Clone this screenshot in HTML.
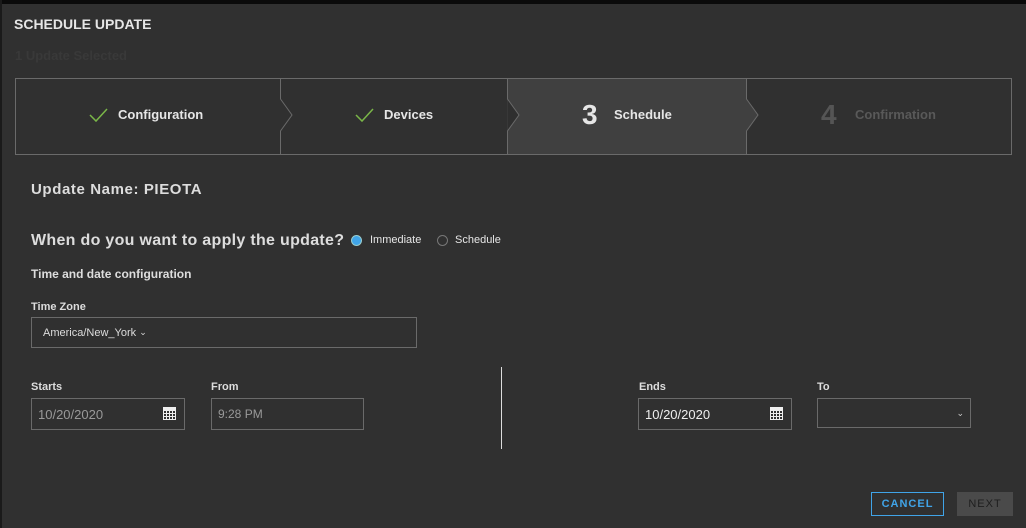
<!DOCTYPE html>
<html><head><style>
*{box-sizing:border-box;margin:0;padding:0}
body{width:1026px;height:528px;background:#303030;font-family:"Liberation Sans",sans-serif;position:relative;overflow:hidden;color:#e6e6e6}
.a{position:absolute}
.top{left:0;top:0;width:1026px;height:4px;background:#0a0a0a}
.lb{font-weight:bold;font-size:11px;color:#ddd}
.box{border:1px solid #6a6a6a;height:32px;font-size:13px;color:#999;padding:0 6px;display:flex;align-items:center}
.cal{position:absolute;right:8px;top:8px;width:13px;height:13px;background:
linear-gradient(#eee,#eee) 0 0/13px 3px no-repeat;border:1px solid #eee}
.cal:after{content:"";position:absolute;left:0;top:3px;right:0;bottom:0;background:
repeating-linear-gradient(90deg,transparent 0 2px,#eee 2px 3px),repeating-linear-gradient(transparent 0 2px,#eee 2px 3px)}
</style></head><body>
<div class="a top"></div>
<div class="a" style="left:0;top:0;width:2px;height:528px;background:#1a1a1a"></div>
<div class="a" style="left:14px;top:16px;font-size:14px;font-weight:bold;color:#e6e6e6">SCHEDULE UPDATE</div>
<div class="a" style="left:15px;top:48px;font-size:13px;font-weight:bold;color:#393939">1 Update Selected</div>
<div class="a" style="left:15px;top:78px;width:997px;height:77px;border:1px solid #6a6a6a"></div>
<div class="a" style="left:507px;top:79px;width:240px;height:75px;background:#404040"></div>
<svg class="a" style="left:0;top:78px" width="1026" height="77">
<path d="M280.5 0V21L292 37L280.5 53V77" stroke="#6a6a6a" fill="none"/>
<path d="M507.5 0V21L519 37L507.5 53V77" stroke="#6a6a6a" fill="#2f2f2f"/>
<path d="M746.5 0V21L758 37L746.5 53V77" stroke="#6a6a6a" fill="#404040"/>
<path d="M90 37l6 6l11-12" stroke="#7ab648" stroke-width="1.5" fill="none"/>
<path d="M356 37l6 6l11-12" stroke="#7ab648" stroke-width="1.5" fill="none"/>
</svg>
<div class="a" style="left:118px;top:107px;font-size:13px;font-weight:bold">Configuration</div>
<div class="a" style="left:384px;top:107px;font-size:13px;font-weight:bold">Devices</div>
<div class="a" style="left:582px;top:99px;font-size:28px;font-weight:bold;color:#e6e6e6">3</div>
<div class="a" style="left:614px;top:107px;font-size:13px;font-weight:bold">Schedule</div>
<div class="a" style="left:821px;top:99px;font-size:28px;font-weight:bold;color:#555">4</div>
<div class="a" style="left:855px;top:107px;font-size:13px;font-weight:bold;color:#595959">Confirmation</div>
<div class="a" style="left:31px;top:181px;font-size:15px;font-weight:bold;color:#ddd;letter-spacing:0.6px">Update Name: PIEOTA</div>
<div class="a" style="left:31px;top:232px;font-size:16px;font-weight:bold;color:#ddd;letter-spacing:0.3px">When do you want to apply the update?</div>
<div class="a" style="left:351px;top:235px;width:11px;height:11px;border-radius:50%;background:#40a4e8;border:1px solid #9cc"></div>
<div class="a" style="left:370px;top:234px;font-size:11px">Immediate</div>
<div class="a" style="left:437px;top:235px;width:11px;height:11px;border-radius:50%;border:1px solid #777"></div>
<div class="a" style="left:455px;top:234px;font-size:11px">Schedule</div>
<div class="a" style="left:31px;top:267px;font-size:12px;font-weight:bold;color:#ddd">Time and date configuration</div>
<div class="a lb" style="left:31px;top:301px">Time Zone</div>
<div class="a box" style="left:31px;top:317px;width:386px;height:31px;color:#ddd;font-size:11px;padding-left:11px">America/New_York&nbsp;<span style="font-size:9px">&#8964;</span></div>
<div class="a lb" style="left:31px;top:381px">Starts</div>
<div class="a box" style="left:31px;top:398px;width:154px">10/20/2020<span class="cal"></span></div>
<div class="a lb" style="left:211px;top:381px">From</div>
<div class="a box" style="left:211px;top:398px;width:153px;font-size:12px">9:28 PM</div>
<div class="a" style="left:501px;top:367px;width:1px;height:82px;background:#ddd"></div>
<div class="a lb" style="left:639px;top:381px">Ends</div>
<div class="a box" style="left:638px;top:398px;width:154px;color:#eee">10/20/2020<span class="cal"></span></div>
<div class="a lb" style="left:817px;top:381px">To</div>
<div class="a box" style="left:817px;top:398px;width:154px;height:30px;justify-content:flex-end;color:#ccc;font-size:9px">&#8964;</div>
<div class="a" style="left:871px;top:492px;width:73px;height:24px;border:1px solid #40a4e8;color:#40a4e8;font-size:11px;font-weight:bold;letter-spacing:1px;display:flex;align-items:center;justify-content:center">CANCEL</div>
<div class="a" style="left:957px;top:492px;width:56px;height:24px;background:#4a4a4a;color:#1e1e1e;font-size:11px;letter-spacing:1px;display:flex;align-items:center;justify-content:center">NEXT</div>
</body></html>
